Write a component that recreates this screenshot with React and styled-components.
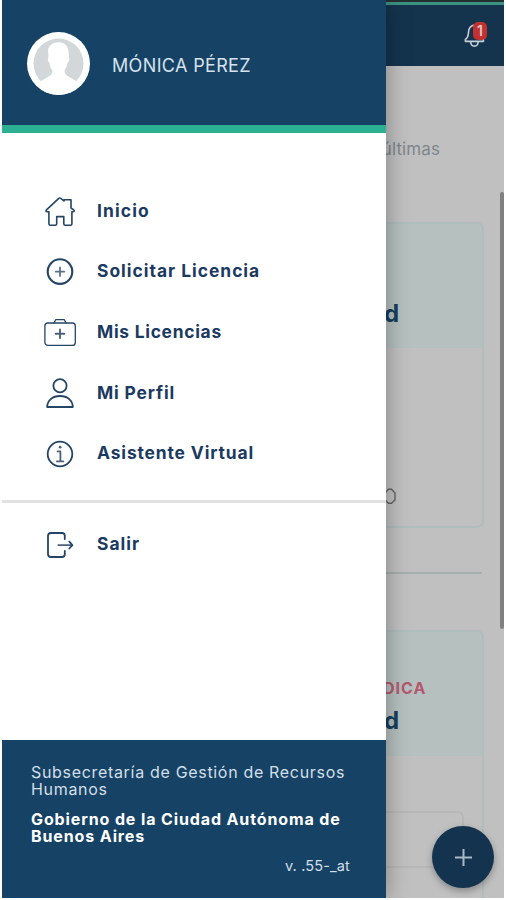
import React from "react";
import styled, { createGlobalStyle } from "styled-components";

const navy = "#164365";

const GlobalStyle = createGlobalStyle`
  * { box-sizing: border-box; }
  body { margin: 0; background: #fff; font-family: Inter, "Liberation Sans", sans-serif; }
  p { margin: 0; }
`;

const Screen = styled.div`
  position: relative;
  width: 502px;
  height: 898px;
  margin-left: 2px;
  overflow: hidden;
  background: #c0c0c0;
`;

const Page = styled.main`
  display: flex;
  flex-direction: column;
  height: 898px;
`;

const StatusBar = styled.div`
  height: 5px;
  flex: none;
  background: #25312f;
  border-bottom: 3px solid #3d9180;
`;

const TopBar = styled.header`
  height: 61px;
  flex: none;
  display: flex;
  justify-content: flex-end;
  padding: 16px 16px 0 0;
  background: #14344e;
`;

const Alerts = styled.div`
  position: relative;
  width: 24px;
  height: 28px;
  svg { display: block; }
`;

const Badge = styled.span`
  position: absolute;
  top: 1px;
  right: 1px;
  width: 14px;
  height: 18px;
  border-radius: 5px;
  background: #c4302f;
  color: #d8c9c9;
  font-size: 14px;
  font-weight: 600;
  line-height: 18px;
  text-align: center;
`;

const Intro = styled.p`
  height: 156px;
  flex: none;
  padding: 73px 64px 0 0;
  color: #7f868d;
  font-size: 17px;
  line-height: 20px;
  letter-spacing: 0.1px;
  text-align: right;
`;

const Card = styled.section`
  width: 464px;
  height: ${(p) => p.$height}px;
  flex: none;
  margin-left: 18px;
  border: 2px solid #afbdbb;
  border-radius: 7px;
  overflow: hidden;
`;

const CardHead = styled.div`
  height: ${(p) => p.$height}px;
  padding: ${(p) => p.$top}px 0 0 361px;
  background: #b5c0bf;
`;

const Category = styled.p`
  height: 28px;
  color: #b45870;
  font-size: 16px;
  font-weight: 700;
  line-height: 20px;
  letter-spacing: 1px;
`;

const CardTitle = styled.h2`
  margin: 0 0 0 1px;
  color: #173e5e;
  font-size: 24px;
  font-weight: 700;
  line-height: 30px;
`;

const CardMark = styled.div`
  padding: 140px 0 0 361px;
  svg { display: block; }
`;

const Field = styled.div`
  width: 426px;
  height: 57px;
  margin: 55px 0 0 16px;
  border: 2px solid #b7b7b7;
  border-radius: 6px;
`;

const Separator = styled.hr`
  width: 462px;
  height: 2px;
  flex: none;
  margin: 44px 0 56px 18px;
  border: 0;
  background: #a8adad;
`;

const ScrollThumb = styled.div`
  position: absolute;
  top: 192px;
  right: 0;
  width: 4px;
  height: 437px;
  border-radius: 2px;
  background: #808080;
`;

const AddButton = styled.button`
  position: absolute;
  right: 10px;
  bottom: 10px;
  width: 62px;
  height: 62px;
  padding: 0;
  border: 0;
  border-radius: 50%;
  background: #13334e;
  box-shadow: 0 3px 7px rgba(0, 0, 0, 0.3);
  svg { display: block; margin: auto; }
`;

const Drawer = styled.aside`
  position: absolute;
  top: 0;
  left: 0;
  width: 384px;
  height: 898px;
  display: flex;
  flex-direction: column;
  background: #fff;
  box-shadow: 0 0 22px rgba(0, 0, 0, 0.34);
`;

const Profile = styled.header`
  height: 133px;
  flex: none;
  display: flex;
  gap: 22px;
  padding: 32px 0 0 25px;
  background: ${navy};
  border-bottom: 8px solid #2bb092;
`;

const Avatar = styled.div`
  width: 63px;
  height: 63px;
  border-radius: 50%;
  overflow: hidden;
  background: #fff;
  svg { display: block; }
`;

const UserName = styled.p`
  padding-top: 23px;
  color: #d8e2ec;
  font-size: 18px;
  line-height: 22px;
  letter-spacing: 0.35px;
`;

const Menu = styled.nav`
  height: 370px;
  flex: none;
  padding-top: 48px;
  border-bottom: 3px solid #e1e1e1;
`;

const MenuItem = styled.a`
  display: flex;
  align-items: center;
  gap: 20px;
  height: 60.6px;
  padding-left: 41px;
  color: #1b3a61;
  svg { display: block; flex: none; }
`;

const MenuLabel = styled.span`
  padding-bottom: 1px;
  font-size: 17.4px;
  font-weight: 700;
  line-height: 22px;
  letter-spacing: ${(p) => p.$track}px;
  white-space: nowrap;
`;

const Session = styled.div`
  flex: 1;
  padding-top: 11.5px;
`;

const Footer = styled.footer`
  height: 158px;
  flex: none;
  padding: 24px 35px 0 29px;
  background: ${navy};
  color: #d3dfe9;
  font-size: 16px;
  line-height: 17px;
`;

const Department = styled.p`
  letter-spacing: 0.68px;
  white-space: nowrap;
`;

const Government = styled.p`
  margin-top: 13px;
  color: #fff;
  font-weight: 700;
  letter-spacing: 0.88px;
  white-space: nowrap;
`;

const Version = styled.p`
  margin-top: 12px;
  padding-right: 1px;
  font-size: 14.5px;
  letter-spacing: 0.15px;
  text-align: right;
`;

function Icon({ children }) {
  return (
    <svg width="34" height="34" viewBox="0 0 34 34" fill="none" stroke="#244565" strokeWidth="1.8" strokeLinecap="round" strokeLinejoin="round">
      {children}
    </svg>
  );
}

const icons = {
  home: (
    <path strokeWidth="1.6" d="M5.9 17.8H4.2Q2.2 17.5 3.5 15.8L15.8 4.4Q16.8 3.6 17.8 4.4L21 7V5.8H28V14L31 16.2Q31.6 17.7 30 17.8H28.9V29.8Q28.9 31.2 27.5 31.2H22.2Q20.8 31.2 20.8 29.8V22.6H13.7V29.8Q13.7 31.2 12.3 31.2H7.3Q5.9 31.2 5.9 29.8Z" />
  ),
  add: (
    <>
      <circle cx="17" cy="16.6" r="12.3" strokeWidth="2.1" />
      <path strokeWidth="1.8" stroke="#5c7289" d="M12.7 16.6H21.3M17 12.3V20.9" />
    </>
  ),
  kit: (
    <>
      <rect x="1.9" y="8" width="30.4" height="22.4" rx="3" strokeWidth="1.3" />
      <path strokeWidth="1.3" d="M11 8L12.6 4.7H21.4L23 8" />
      <path strokeWidth="1.9" stroke="#4b6179" d="M12.7 18.8H21.3M17 14.5V23.1" />
    </>
  ),
  user: (
    <>
      <circle cx="17" cy="9.7" r="6.6" />
      <path d="M4.2 31C4.2 24.6 9.5 20 17 20S29.8 24.6 29.8 31Z" />
    </>
  ),
  info: (
    <>
      <circle cx="17" cy="17" r="12.3" />
      <path stroke="#4b6179" d="M14.6 14.4H17.4V24M13.9 24.4H20.3" />
      <circle cx="17.1" cy="10.2" r="1.4" fill="#4b6179" stroke="none" />
    </>
  ),
  exit: (
    <>
      <path d="M21.8 11V7.7Q21.8 5 19 5H8Q5 5 5 8V26Q5 29 8 29H19Q21.8 29 21.8 26.3V23" />
      <path stroke="#4b6179" d="M15.3 17.1H28" />
      <path d="M26.3 13.7L29.4 17.1L26.3 20.5" />
    </>
  ),
};

const entries = [
  { icon: "home", label: "Inicio", track: 1.15 },
  { icon: "add", label: "Solicitar Licencia", track: 1 },
  { icon: "kit", label: "Mis Licencias", track: 0.72 },
  { icon: "user", label: "Mi Perfil", track: 0.85 },
  { icon: "info", label: "Asistente Virtual", track: 0.88 },
];

function Entry({ icon, label, track }) {
  return (
    <MenuItem>
      <Icon>{icons[icon]}</Icon>
      <MenuLabel $track={track}>{label}</MenuLabel>
    </MenuItem>
  );
}

export default function App() {
  return (
    <>
      <GlobalStyle />
      <Screen>
        <Page>
          <StatusBar />
          <TopBar>
            <Alerts>
              <svg width="24" height="28" viewBox="0 0 24 28" fill="none" stroke="#c5d0d9" strokeWidth="1.6" strokeLinejoin="round">
                <path d="M10.5 4C6.4 4.6 4.7 7.6 4.5 11C4.4 15 3.6 17 1.4 18.4V20.4H19.4V18.4C17.2 17 16.6 15 16.5 11C16.3 7.6 14 4.6 10.5 4Z" />
                <path d="M6.6 20.8C7 26.6 13.8 26.6 14.2 20.8" />
              </svg>
              <Badge>1</Badge>
            </Alerts>
          </TopBar>
          <Intro>últimas</Intro>
          <Card $height={306}>
            <CardHead $height={124} $top={75}>
              <CardTitle>d</CardTitle>
            </CardHead>
            <CardMark>
              <svg width="15" height="17" viewBox="0 0 15 17" fill="none" stroke="#656565" strokeWidth="1.4">
                <path d="M5.5 1.3H8.5L12 5V12L8.5 15.3H5.5L2 12V5Z" />
              </svg>
            </CardMark>
          </Card>
          <Separator />
          <Card $height={290}>
            <CardHead $height={124} $top={46}>
              <Category>DICA</Category>
              <CardTitle>d</CardTitle>
            </CardHead>
            <Field />
          </Card>
        </Page>
        <ScrollThumb />
        <AddButton aria-label="+">
          <svg width="20" height="20" viewBox="0 0 20 20" stroke="#a9b9c6" strokeWidth="2">
            <path d="M2 10.5H19M10.5 2V19" />
          </svg>
        </AddButton>
        <Drawer>
          <Profile>
            <Avatar>
              <svg width="63" height="63" viewBox="0 0 63 63">
                <circle cx="31.5" cy="31.5" r="25" fill="#d2d7da" />
                <path fill="#fff" d="M31 10.5C35 9.5 41 13 41.5 19L42 25.5C43 27 42 30 40.5 31C40 35 38 37 37.5 38.5C37.5 44 43 45 49 49L44 63H18L14 49C20 45 25.5 44 25.5 38.5C23.5 36 22.5 34 22.5 31C20.5 29 20.5 26 21.5 25.5L21 18C22 13 26 10.5 31 10.5Z" />
              </svg>
            </Avatar>
            <UserName>MÓNICA PÉREZ</UserName>
          </Profile>
          <Menu>
            {entries.map((e) => <Entry key={e.label} {...e} />)}
          </Menu>
          <Session>
            <Entry icon="exit" label="Salir" track={1} />
          </Session>
          <Footer>
            <Department>Subsecretaría de Gestión de Recursos<br />Humanos</Department>
            <Government>Gobierno de la Ciudad Autónoma de<br />Buenos Aires</Government>
            <Version>v. .55-_at</Version>
          </Footer>
        </Drawer>
      </Screen>
    </>
  );
}
